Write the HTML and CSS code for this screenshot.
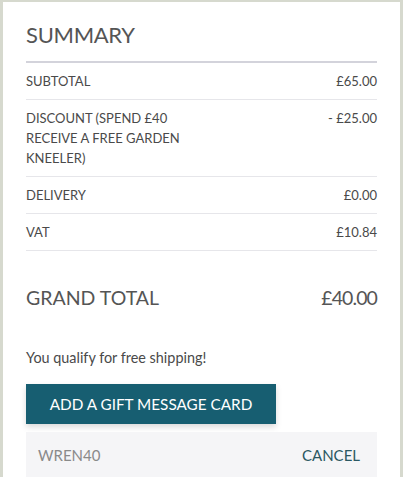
FILE: index.html
```html
<!DOCTYPE html>
<html>
<head>
<meta charset="utf-8">
<link rel="stylesheet" href="styles.css">
</head>
<body>
<div class="panel">
  <h2 class="title">SUMMARY</h2>
  <div class="rows">
    <div class="row"><span class="label">SUBTOTAL</span><span class="value">£65.00</span></div>
    <div class="row"><span class="label narrow">DISCOUNT (SPEND £40 RECEIVE A FREE GARDEN KNEELER)</span><span class="value">- £25.00</span></div>
    <div class="row"><span class="label">DELIVERY</span><span class="value">£0.00</span></div>
    <div class="row"><span class="label">VAT</span><span class="value">£10.84</span></div>
  </div>
  <div class="grand"><span>GRAND TOTAL</span><span class="grand-value">£40.00</span></div>
  <p class="note">You qualify for free shipping!</p>
  <button class="gift">ADD A GIFT MESSAGE CARD</button>
  <div class="coupon"><span class="code">WREN40</span><span class="cancel">CANCEL</span></div>
</div>
</body>
</html>
```
FILE: styles.css
```css
html, body {
  margin: 0;
  padding: 0;
  height: 100%;
}
body {
  background: #d6d9ce;
  font-family: "Lato", "Liberation Sans", sans-serif;
  color: #4a4a4a;
  overflow: hidden;
}
.panel {
  background: #ffffff;
  margin: 2px 3px 0 3px;
  padding: 18px 23px 0 23px;
  min-height: 480px;
}
.title {
  margin: 0 0 11px 0;
  font-weight: 400;
  font-size: 22px;
  line-height: 30px;
  color: #555555;
  letter-spacing: -0.3px;
}
.rows {
  border-top: 2px solid #d3d3db;
}
.row {
  display: flex;
  justify-content: space-between;
  align-items: flex-start;
  padding: 8px 0;
  border-bottom: 1px solid #e6e6ea;
  font-size: 13px;
  line-height: 20px;
}
.label.narrow {
  width: 180px;
}
.grand {
  display: flex;
  justify-content: space-between;
  margin-top: 35px;
  font-size: 19.5px;
  line-height: 24px;
  color: #555555;
}
.grand-value {
  letter-spacing: -0.9px;
}
.note {
  margin: 38px 0 0 0;
  font-size: 14.4px;
  line-height: 20px;
}
.gift {
  display: block;
  margin-top: 16px;
  width: 250px;
  height: 40px;
  border: none;
  background: #175e71;
  color: #ffffff;
  font-family: "Lato", "Liberation Sans", sans-serif;
  font-size: 15.3px;
  padding: 0;
  box-shadow: 0 3px 6px rgba(0,0,0,0.15);
}
.coupon {
  display: flex;
  justify-content: space-between;
  align-items: center;
  margin-top: 8px;
  height: 46px;
  padding: 0 17px 0 12px;
  background: #f5f5f7;
  font-size: 15px;
}
.code {
  color: #8a8a8a;
}
.cancel {
  color: #2b5862;
}
```
